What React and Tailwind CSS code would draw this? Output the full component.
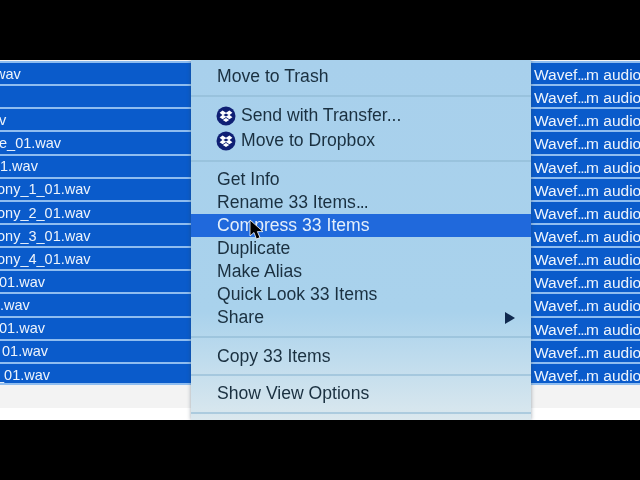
const rows = [
  { name: 'wav', cls: '-ml-[5px]' },
  { name: '', cls: '' },
  { name: 'v', cls: '-ml-[1px]' },
  { name: 'e_01.wav', cls: '-ml-[1px]' },
  { name: '1.wav', cls: '' },
  { name: 'ony_1_01.wav', cls: '-ml-[3px]' },
  { name: 'ony_2_01.wav', cls: '-ml-[3px]' },
  { name: 'ony_3_01.wav', cls: '-ml-[3px]' },
  { name: 'ony_4_01.wav', cls: '-ml-[3px]' },
  { name: '01.wav', cls: '-ml-[1px]' },
  { name: '.wav', cls: '' },
  { name: '01.wav', cls: '-ml-[1px]' },
  { name: '01.wav', cls: 'ml-[2px]' },
  { name: '_01.wav', cls: '-ml-[4px]' },
];

function DropboxIcon() {
  return (
    <svg width="20" height="20" viewBox="0 0 20 20" className="-ml-[1px] shrink-0">
      <circle cx="10" cy="10" r="9.5" fill="#0f1f74" />
      <path
        d="M6.6 4.6 L10 6.8 L13.4 4.6 L16.4 6.8 L13.6 9 L16.4 11.2 L13.4 13.2 L10 11 L6.6 13.2 L3.6 11.2 L6.4 9 L3.6 6.8 Z M10 7.4 L7.4 9 L10 10.6 L12.6 9 Z M6.8 14 L10 12 L13.2 14 L10 16 Z"
        fill="#ffffff"
        fillRule="evenodd"
      />
    </svg>
  );
}

function Item({ label, active, icon, tall, arrow }) {
  return (
    <div
      className={`flex items-center justify-between ${tall ? 'h-[25px]' : 'h-[23px]'} pl-[26px] pr-[16px] ${active ? 'bg-[#2069dc] text-[#e4effb]' : ''}`}
    >
      <div className="flex items-center gap-[5px] whitespace-nowrap">
        {icon && <DropboxIcon />}
        <span>{label}</span>
      </div>
      {arrow && (
        <svg width="10" height="12" viewBox="0 0 10 12">
          <path d="M0 0 L10 6 L0 12 Z" fill="#10294f" />
        </svg>
      )}
    </div>
  );
}

function Sep({ h }) {
  return (
    <div className={`flex items-center ${h}`}>
      <div className="h-[2px] w-full bg-[#8fb9d3]/60" />
    </div>
  );
}

export default function App() {
  return (
    <div className="h-[480px] w-[640px] overflow-hidden bg-black py-[60px] font-['Liberation_Sans',sans-serif]">
      <div className="relative flex h-[360px] flex-col overflow-hidden bg-white">
        {/* selected file rows */}
        <div className="h-[348px] bg-[#f3f3f3] pt-[1px]">
          <div className="h-[324px] overflow-hidden border-y-2 border-[#8fbdf0] bg-[#0a5bcb] text-[14.5px] text-[#eef4fc] blur-[0.4px]">
            {rows.map((r, i) => (
              <div
                key={i}
                className="flex h-[23.15px] items-center justify-between overflow-hidden border-b-2 border-[#8fbdf0] bg-[#0a5bcb] pt-[2px]"
              >
                <span className={`whitespace-nowrap ${r.cls}`}>{r.name}</span>
                <span className="w-[106px] shrink-0 text-[15.5px] whitespace-nowrap">
                  Wavef<span className="tracking-[-1.4px]">...</span>m audio
                </span>
              </div>
            ))}
          </div>
        </div>

        {/* context menu */}
        <div className="absolute top-0 bottom-0 left-[191px] w-[340px] bg-gradient-to-b from-[#a8d0ec] via-[#a9d2ec] via-70% to-[#dbe8ee] pt-[5px] text-[17.6px] text-[#1a3040] shadow-[0_0_4px_rgba(40,60,80,0.45)]">
          <div className="blur-[0.4px]">
            <Item label="Move to Trash" />
            <Sep h="h-[15px]" />
            <Item label="Send with Transfer..." icon tall />
            <Item label="Move to Dropbox" icon tall />
            <Sep h="h-[15px]" />
            <Item label="Get Info" />
            <Item label={<>Rename 33 Items<span className="tracking-[-1px]">...</span></>} />
            <Item label="Compress 33 Items" active />
            <Item label="Duplicate" />
            <Item label="Make Alias" />
            <Item label="Quick Look 33 Items" />
            <Item label="Share" arrow />
            <Sep h="h-[16px]" />
            <Item label="Copy 33 Items" />
            <Sep h="h-[14px]" />
            <Item label="Show View Options" />
            <Sep h="h-[15px]" />
          </div>
        </div>

        {/* mouse pointer */}
        <svg width="15" height="22" viewBox="0 0 15 22" className="absolute top-[159px] left-[249px]">
          <path d="M1 1 L1 17 L5 13.5 L7.4 20 L11 18.6 L8.4 12.6 L14 12.6 Z" fill="#000000" stroke="#ffffff" strokeWidth="0.8" />
        </svg>
      </div>
    </div>
  );
}
